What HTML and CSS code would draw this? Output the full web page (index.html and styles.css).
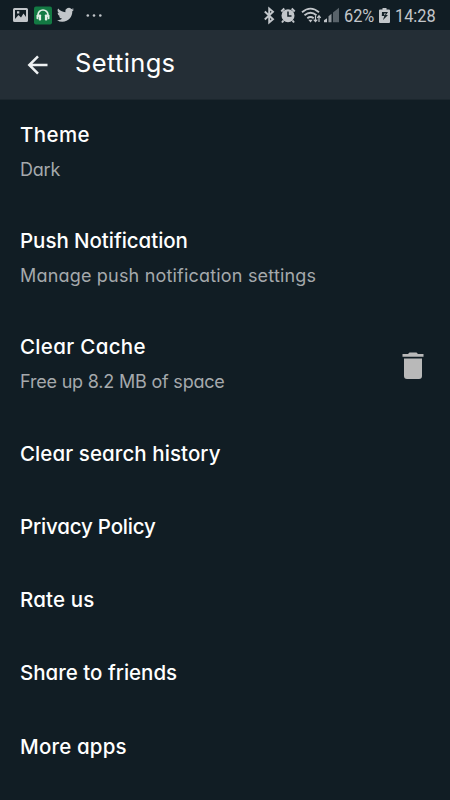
FILE: index.html
```
<!DOCTYPE html>
<html lang="en">
<head>
<meta charset="utf-8">
<title>Settings</title>
<link rel="stylesheet" href="styles.css">
</head>
<body>
<div class="status">
  <svg class="status-icons" width="110" height="30" viewBox="0 0 110 30">
    <path fill="#c2c6ca" fill-rule="evenodd" d="M14.5 8h12a1.5 1.5 0 0 1 1.5 1.500v11a1.500 1.500 0 0 1-1.500 1.500h-12a1.500 1.500 0 0 1-1.500-1.500v-11A1.500 1.500 0 0 1 14.500 8zM15 10v9l3.500-4 2.500 2.500 2.500-4L26 17v-7zM17 11.300h2.300v2.300H17z"/>
    <rect x="34" y="6.500" width="18" height="18" rx="2" fill="#137a43"/>
    <path d="M38 17v-2a5 5 0 0 1 10 0v2" fill="none" stroke="#e1eee5" stroke-width="1.700"/>
    <rect x="36.500" y="14.800" width="1.800" height="4.500" rx=".8" fill="#e1eee5"/>
    <rect x="38.700" y="14.500" width="2.400" height="6" rx=".8" fill="#e1eee5"/>
    <rect x="44.900" y="14.500" width="2.400" height="6" rx=".8" fill="#e1eee5"/>
    <rect x="47.700" y="14.800" width="1.800" height="4.500" rx=".8" fill="#e1eee5"/>
    <path transform="translate(57 6.300) scale(.71)" fill="#c2c6ca" d="M23.950 4.570a10 10 0 0 1-2.820.77 4.960 4.960 0 0 0 2.160-2.720c-.95.550-2 .950-3.130 1.180a4.920 4.920 0 0 0-8.380 4.480C7.690 8.090 4.070 6.130 1.640 3.160a4.920 4.920 0 0 0 1.520 6.570 4.900 4.900 0 0 1-2.230-.61v.06a4.920 4.920 0 0 0 3.950 4.830 5 5 0 0 1-2.210.08 4.940 4.940 0 0 0 4.600 3.420A9.870 9.870 0 0 1 0 19.540a14 14 0 0 0 7.550 2.210c9.050 0 14-7.500 14-13.980 0-.21 0-.42-.02-.63a9.940 9.940 0 0 0 2.420-2.570z"/>
    <g fill="#c2c6ca"><circle cx="87.800" cy="15.500" r="1.300"/><circle cx="94" cy="15.500" r="1.300"/><circle cx="100.300" cy="15.500" r="1.300"/></g>
  </svg>
  <svg class="status-icons signal" width="84" height="30" viewBox="260 0 84 30">
    <path d="M264.800 11.500l8.200 7.800-3.800 3.200V8.500l3.800 3.300-8.200 7.700" fill="none" stroke="#c2c6ca" stroke-width="1.900"/>
    <circle cx="288" cy="15.700" r="6.500" fill="#c2c6ca"/>
    <path d="M281.300 11.500l3-3M294.700 11.500l-3-3M283.500 20.500l-1.500 2M292.500 20.500l1.500 2" stroke="#c2c6ca" stroke-width="2"/>
    <path d="M288 11.500v4.500h3.500" fill="none" stroke="#111d24" stroke-width="1.500"/>
    <g fill="none" stroke="#c2c6ca" stroke-width="1.800"><path d="M302 12.300q8.500-7.300 17 0M304.500 15.300q6-5 12 0M307.300 18.200q3.200-2.500 6.400 0"/></g>
    <path d="M308.300 19.800h4.400l-2.200 2.700z" fill="#c2c6ca"/>
    <path d="M315.500 15.500v6M313.700 19.700l1.800 2 1.800-2M319 22v-6M317.300 17.800l1.700-2 1.700 2" fill="none" stroke="#c2c6ca" stroke-width="1.200"/>
    <path d="M324 22.300v-2l3-2v4z" fill="#c2c6ca"/>
    <path d="M328.500 22.300v-6l3-2.500v8.500z" fill="#8d9499"/>
    <path d="M333 22.300v-9.800l6-4.700v14.500z" fill="#59636a"/>
  </svg>
  <span class="cond percent"><span>62%</span></span>
  <svg class="battery" width="12" height="30" viewBox="379 0 12 30">
    <path d="M382.500 8h4v1.500h2.500a1 1 0 0 1 1 1V22a1 1 0 0 1-1 1h-9a1 1 0 0 1-1-1V10.500a1 1 0 0 1 1-1h2.500z" fill="#c2c6ca"/>
    <path d="M382 12h6l-2 3h2l-5 5 1.300-4h-2.500z" fill="#16232a"/>
    <path d="M384 13.500h2l-1.500 2z" fill="#c2c6ca"/>
  </svg>
  <span class="cond clock"><span>14:28</span></span>
</div>
<header class="bar">
  <svg class="back" width="22" height="20" viewBox="0 0 22 20"><path d="M20.500 10H2.500M11 1.300L2.300 10l8.700 8.700" fill="none" stroke="#eef1f3" stroke-width="2.500"/></svg>
  <h1>Settings</h1>
</header>
<main class="list">
  <div class="item two"><div><h2 class="t1">Theme</h2><p class="s1">Dark</p></div></div>
  <div class="item two"><div><h2 class="t2">Push Notification</h2><p class="s2">Manage push notification settings</p></div></div>
  <div class="item two"><div><h2 class="t3">Clear Cache</h2><p class="s3">Free up 8.2 MB of space</p></div>
    <svg class="trash" width="22" height="28" viewBox="0 0 22 28"><path fill="#b9b9b9" d="M.5 2h5.500L7.500.5h7L16 2h5.500v2.700H.500zM2 6.500h18v17.500a3 3 0 0 1-3 3H5a3 3 0 0 1-3-3z"/></svg>
  </div>
  <div class="item"><h2 class="t4">Clear search history</h2></div>
  <div class="item"><h2 class="t5">Privacy Policy</h2></div>
  <div class="item"><h2 class="t6">Rate us</h2></div>
  <div class="item"><h2 class="t7">Share to friends</h2></div>
  <div class="item"><h2 class="t8">More apps</h2></div>
</main>
</body>
</html>
```
FILE: styles.css
```
* { box-sizing: border-box; }
body {
  margin: 0;
  height: 800px;
  overflow: hidden;
  background: #111d24;
  color: #fff;
  font-family: Inter, "Open Sans", sans-serif;
  font-feature-settings: "cv11";
}
h1, h2, p { margin: 0; white-space: nowrap; }
svg { display: block; flex: none; }
.status { display: flex; height: 30px; align-items: center; }
.signal { margin-left: 150px; }
.cond { font: 19px/30px Roboto, sans-serif; color: #c2c6ca; height: 30px; padding-top: 1px; }
.cond span { display: inline-block; transform: scaleX(.86); transform-origin: 0 50%; }
.percent { width: 35px; }
.clock { width: 46px; margin-left: 4px; }
.bar {
  display: flex;
  height: 70px;
  padding: 0 27px;
  align-items: center;
  background: #242e36;
  border-bottom: 1px solid #1c272e;
}
.back { margin-right: 26px; }
h1 { font-size: 25.5px; font-weight: 400; line-height: 30px; margin-bottom: 4px; letter-spacing: .35px; }
.item { display: flex; height: 73.3px; padding: 17px 26px 0 20px; justify-content: space-between; }
.two { height: 106.2px; }
h2 { font-size: 20.5px; font-weight: 550; line-height: 35px; }
p { font-size: 18px; font-weight: 370; line-height: 35px; color: #a5a9ac; }
.t1 { letter-spacing: .4px; }
.t2 { letter-spacing: -.05px; }
.t3 { letter-spacing: .33px; }
.t4 { letter-spacing: .08px; }
.t5 { letter-spacing: -.18px; }
.t6 { letter-spacing: .15px; }
.t8 { letter-spacing: .17px; }
.s1 { letter-spacing: -.2px; }
.s2 { letter-spacing: .19px; }
.s3 { letter-spacing: -.2px; }
.trash { margin-top: 23px; }
```
